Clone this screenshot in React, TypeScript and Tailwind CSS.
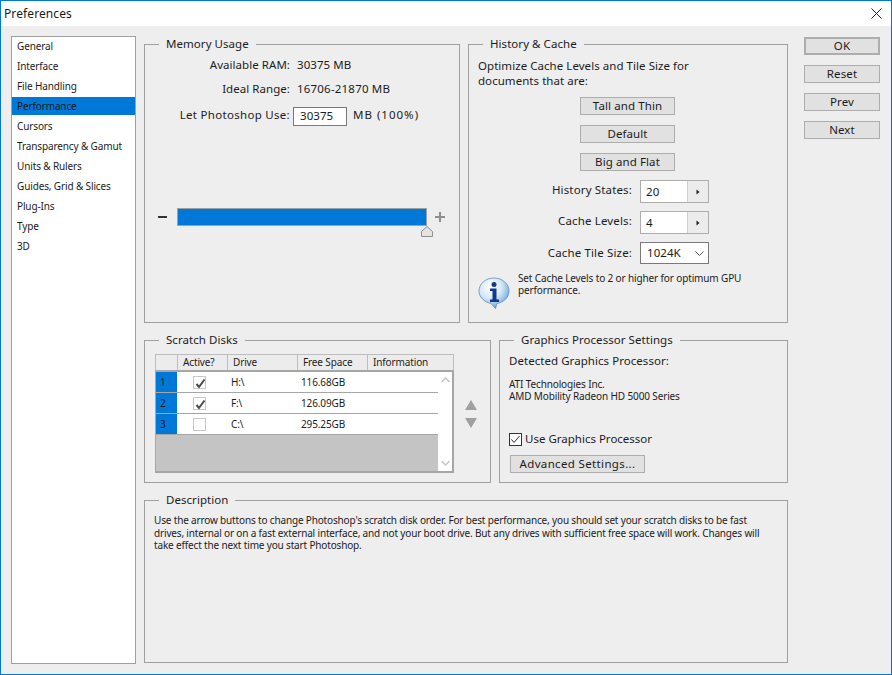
import type { ReactNode } from "react";

const categories = [
  "General",
  "Interface",
  "File Handling",
  "Performance",
  "Cursors",
  "Transparency & Gamut",
  "Units & Rulers",
  "Guides, Grid & Slices",
  "Plug-Ins",
  "Type",
  "3D",
];

const disks = [
  { n: 1, on: true, drive: "H:\\", free: "116.68GB" },
  { n: 2, on: true, drive: "F:\\", free: "126.09GB" },
  { n: 3, on: false, drive: "C:\\", free: "295.25GB" },
];

function Group({ title, className, children }: { title: string; className?: string; children: ReactNode }) {
  return (
    <fieldset className={`min-w-0 border border-[#a0a0a0] ${className ?? ""}`}>
      <legend className="ml-[14px] h-[17px] px-[7px] text-[11.5px] leading-[15px] tracking-[0.05px]">{title}</legend>
      {children}
    </fieldset>
  );
}

function Btn({ label, className }: { label: string; className?: string }) {
  return (
    <button className={`flex h-[18px] items-center justify-center border border-[#adadad] bg-[#e1e1e1] text-[11.5px] tracking-[0.1px] ${className ?? ""}`}>
      {label}
    </button>
  );
}

function Spin({ label, value }: { label: string; value: string }) {
  return (
    <div className="flex h-[23px] items-center">
      <span className="w-[163px] pb-[4px] text-right text-[11.5px] tracking-[0.15px]">{label}</span>
      <div className="ml-[8px] flex h-[23px] w-[69px] border border-[#adadad] bg-white">
        <span className="w-[46px] pl-[5px] text-[11.5px] leading-[22px] tracking-[0.05px]">{value}</span>
        <span className="flex flex-1 items-center justify-center border-l border-[#d0d0d0] bg-[#ececec]">
          <svg width="4" height="6" viewBox="0 0 4 6"><path d="M0.5 0.5 L3.5 3 L0.5 5.5 Z" fill="#222" /></svg>
        </span>
      </div>
    </div>
  );
}

function Check() {
  return (
    <svg width="13" height="13" viewBox="0 0 13 13" className="block">
      <path d="M2.5 7 L5 10 L10.5 2.5" fill="none" stroke="#4a4a4a" strokeWidth="2" />
    </svg>
  );
}

function InfoIcon() {
  return (
    <svg width="32" height="32" viewBox="0 0 32 32" className="shrink-0">
      <defs>
        <radialGradient id="bubble" cx="0.38" cy="0.3" r="0.75">
          <stop offset="0" stopColor="#ffffff" />
          <stop offset="0.5" stopColor="#d6e8f7" />
          <stop offset="0.8" stopColor="#8dbde6" />
          <stop offset="1" stopColor="#3f86cc" />
        </radialGradient>
      </defs>
      <path d="M16 1 C7.5 1 1 7 1 14 C1 20 6 25 13 26.5 L17.5 31.5 L19 26.5 C26.5 25 31 20 31 14 C31 7 24.5 1 16 1 Z" fill="url(#bubble)" stroke="#5b8fc0" strokeWidth="0.8" />
      <circle cx="16" cy="7.5" r="2.5" fill="#123a8c" />
      <path d="M12 11.5 H18.5 V22.5 H21 V25 H12 V22.5 H14.5 V14 H12 Z" fill="#123a8c" />
    </svg>
  );
}

export default function App() {
  return (
    <div className="flex h-[675px] w-[892px] flex-col border border-[#0078d7] bg-white text-[#1c1c1c] font-['Noto_Sans',sans-serif]">
      <div className="flex h-[25px] shrink-0 items-center justify-between pl-[3px] pr-[9px]">
        <span className="text-[12px] tracking-[0.1px]">Preferences</span>
        <svg width="11" height="11" viewBox="0 0 11 11"><path d="M0.5 0.5 L10.5 10.5 M10.5 0.5 L0.5 10.5" stroke="#222" strokeWidth="1" /></svg>
      </div>

      <div className="flex flex-1 bg-[#eeeeee] pl-[10px] pt-[10px]">
        {/* category list */}
        <ul className="h-[628px] w-[125px] border border-[#a0a0a0] bg-white">
          {categories.map((c) => (
            <li key={c} className="h-[20px] pb-[2px]">
              <div className={`h-[18px] pl-[5px] text-[10px] leading-[18px] tracking-[-0.13px] ${c === "Performance" ? "bg-[#0078d7]" : ""}`}>{c}</div>
            </li>
          ))}
        </ul>

        {/* panels */}
        <div className="ml-[8px] flex w-[644px] flex-col gap-[9px]">
          <div className="flex gap-[8px]">
            <Group title="Memory Usage" className="h-[287px] w-[316px]">
              <div className="grid grid-cols-[145px_1fr] items-center text-[11.5px] tracking-[0.05px]">
                <span className="h-[24px] text-right leading-[24px]">Available RAM:</span>
                <span className="h-[24px] pl-[7px] leading-[24px]">30375 MB</span>
                <span className="h-[24px] text-right leading-[24px]">Ideal Range:</span>
                <span className="h-[24px] pl-[7px] leading-[24px] tracking-[0.2px]">16706-21870 MB</span>
                <span className="mt-[6px] h-[19px] text-right leading-[15px] tracking-[0.3px]">Let Photoshop Use:</span>
                <div className="mt-[6px] flex h-[19px] items-start pl-[3px]">
                  <span className="h-[19px] w-[54px] border border-[#7a7a7a] bg-white pl-[6px] leading-[16px]">30375</span>
                  <span className="ml-[6px] leading-[15px] tracking-[1px]">MB (100%)</span>
                </div>
              </div>
              <div className="mt-[82px] flex h-[18px] items-center pl-[13px]">
                <span className="h-[2px] w-[9px] bg-[#333333]" />
                <div className="relative ml-[10px] h-[18px] w-[250px] border border-[#a0a0a0] bg-[#0078d7]">
                  <svg width="12" height="11" viewBox="0 0 12 11" className="absolute left-[243px] top-[17px]">
                    <path d="M6 0.5 L11.5 5.5 V10.5 H0.5 V5.5 Z" fill="#e3e3e3" stroke="#8e8e8e" />
                  </svg>
                </div>
                <svg width="10" height="10" viewBox="0 0 10 10" className="ml-[8px]">
                  <path d="M5 0 V10 M0 5 H10" stroke="#8e8e8e" strokeWidth="2" />
                </svg>
              </div>
            </Group>

            <Group title="History & Cache" className="h-[287px] w-[320px]">
              <p className="mt-[5px] pl-[9px] text-[11.5px] leading-[15px] tracking-[0.05px]">
                Optimize Cache Levels and Tile Size for
                <br />
                documents that are:
              </p>
              <div className="ml-[111px] mt-[9px] flex w-[95px] flex-col gap-[10px]">
                <Btn label="Tall and Thin" />
                <Btn label="Default" />
                <Btn label="Big and Flat" />
              </div>
              <div className="mt-[9px] flex flex-col gap-[8px]">
                <Spin label="History States:" value="20" />
                <Spin label="Cache Levels:" value="4" />
                <div className="flex h-[22px] items-center">
                  <span className="w-[163px] text-right text-[11.5px] tracking-[0.15px]">Cache Tile Size:</span>
                  <div className="ml-[8px] flex h-[22px] w-[69px] items-center justify-between border border-[#7a7a7a] bg-white pl-[6px] pr-[4px] text-[11.5px] tracking-[0.05px]">
                    1024K
                    <svg width="9" height="5" viewBox="0 0 9 5"><path d="M0.5 0.5 L4.5 4.5 L8.5 0.5" fill="none" stroke="#555" /></svg>
                  </div>
                </div>
              </div>
              <div className="mt-[8px] flex pl-[9px]">
                <div className="mt-[5px]"><InfoIcon /></div>
                <p className="ml-[8px] text-[10px] leading-[12px] tracking-[-0.13px]">
                  Set Cache Levels to 2 or higher for optimum GPU
                  <br />
                  performance.
                </p>
              </div>
            </Group>
          </div>

          <div className="flex gap-[8px]">
            <Group title="Scratch Disks" className="h-[151px] w-[347px]">
              <div className="ml-[10px] mt-[5px] flex">
                <div className="w-[299px]">
                  <div className="grid h-[17px] grid-cols-[21px_50px_70px_70px_1fr] border border-[#bdbdbd] border-b-[#a6a6a6] bg-[#ececec] text-[10px] leading-[15px] tracking-[-0.13px]">
                    <span />
                    <span className="border-l border-[#bdbdbd] pl-[5px]">Active?</span>
                    <span className="border-l border-[#bdbdbd] pl-[5px]">Drive</span>
                    <span className="border-l border-[#bdbdbd] pl-[5px]">Free Space</span>
                    <span className="border-l border-[#bdbdbd] pl-[5px]">Information</span>
                  </div>
                  <div className="flex h-[102px] border-y border-l border-r-2 border-[#a6a6a6] border-b-2">
                    <div className="flex flex-1 flex-col bg-[#c4c4c4]">
                      {disks.map((d) => (
                        <div key={d.n} className="grid h-[21px] grid-cols-[21px_50px_70px_1fr] items-center border-b border-[#a6a6a6] bg-white text-[10px] tracking-[-0.13px]">
                          <span className="flex h-full items-center bg-[#0078d7] pl-[4px]">{d.n}</span>
                          <span className="pl-[16px]">
                            <span className="block h-[13px] w-[13px] border border-[#c8c8c8]">{d.on && <Check />}</span>
                          </span>
                          <span className="pl-[4px]">{d.drive}</span>
                          <span className="pl-[4px]">{d.free}</span>
                        </div>
                      ))}
                    </div>
                    <div className="flex w-[14px] flex-col items-center justify-between bg-white py-[5px]">
                      <svg width="9" height="6" viewBox="0 0 9 6"><path d="M0.5 5 L4.5 1 L8.5 5" fill="none" stroke="#c4c4c4" strokeWidth="1.5" /></svg>
                      <svg width="9" height="6" viewBox="0 0 9 6"><path d="M0.5 1 L4.5 5 L8.5 1" fill="none" stroke="#c4c4c4" strokeWidth="1.5" /></svg>
                    </div>
                  </div>
                </div>
                <div className="ml-[11px] mt-[46px] flex flex-col gap-[8px]">
                  <svg width="12" height="10" viewBox="0 0 12 10"><path d="M6 0 L12 10 H0 Z" fill="#a0a0a0" /></svg>
                  <svg width="12" height="10" viewBox="0 0 12 10"><path d="M0 0 H12 L6 10 Z" fill="#a0a0a0" /></svg>
                </div>
              </div>
            </Group>

            <Group title="Graphics Processor Settings" className="h-[151px] w-[289px]">
              <div className="pl-[9px]">
                <p className="mt-[4px] text-[11.5px] leading-[16px] tracking-[0.05px]">Detected Graphics Processor:</p>
                <p className="mt-[9px] text-[10px] leading-[12px] tracking-[-0.13px]">
                  ATI Technologies Inc.
                  <br />
                  AMD Mobility Radeon HD 5000 Series
                </p>
                <div className="mt-[31px] flex h-[13px] items-center">
                  <span className="h-[13px] w-[13px] border border-[#333333] bg-white">
                    <svg width="11" height="11" viewBox="0 0 11 11" className="block"><path d="M1.5 5.5 L4 8.5 L9.5 2" fill="none" stroke="#333" /></svg>
                  </span>
                  <span className="ml-[3px] pb-[2px] text-[11.5px] tracking-[0px]">Use Graphics Processor</span>
                </div>
                <Btn label="Advanced Settings..." className="ml-[1px] mt-[9px] w-[135px] tracking-[0.35px]" />
              </div>
            </Group>
          </div>

          <Group title="Description" className="h-[171px] w-[644px]">
            <p className="mt-[5px] pl-[9px] text-[10px] leading-[12.5px] tracking-[-0.16px]">
              Use the arrow buttons to change Photoshop's scratch disk order. For best performance, you should set your scratch disks to be fast
              <br />
              drives, internal or on a fast external interface, and not your boot drive. But any drives with sufficient free space will work. Changes will
              <br />
              take effect the next time you start Photoshop.
            </p>
          </Group>
        </div>

        {/* dialog buttons */}
        <div className="ml-[16px] mt-[1px] flex w-[76px] flex-col gap-[10px]">
          <Btn label="OK" className="border-2 border-[#0078d7]" />
          <Btn label="Reset" />
          <Btn label="Prev" />
          <Btn label="Next" />
        </div>
      </div>
    </div>
  );
}
